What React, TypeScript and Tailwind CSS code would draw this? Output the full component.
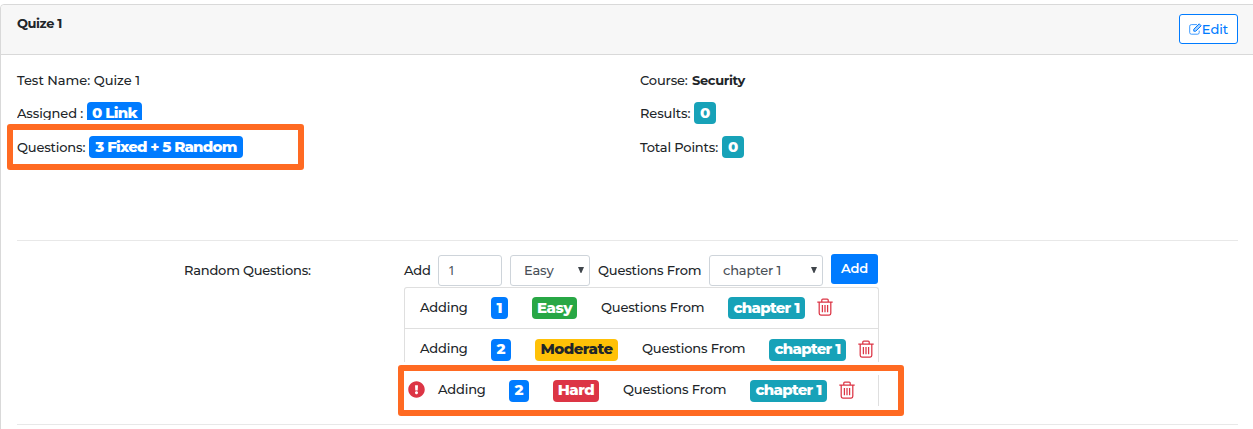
import React from "react";
import { FaExclamationCircle } from "react-icons/fa";

function Label({ children, className = "" }: { children: React.ReactNode; className?: string }) {
  return <span className={"block shrink-0 whitespace-nowrap " + className}>{children}</span>;
}

function Badge({ children, className = "" }: { children: React.ReactNode; className?: string }) {
  return (
    <span
      className={
        "flex h-[22px] shrink-0 items-center justify-center rounded pb-[2px] whitespace-nowrap text-[15px] leading-none font-extrabold " +
        className
      }
    >
      {children}
    </span>
  );
}

function Trash({ className = "" }: { className?: string }) {
  return (
    <svg className={"h-[18px] w-4 shrink-0 " + className} viewBox="0 0 16 18" fill="none" stroke="#dc3545" strokeWidth="1.25">
      <path d="M.3 4.2H15.7M4.8 4V2Q4.8 1 5.8 1H10.2Q11.2 1 11.2 2V4M2.2 4.4V15.3Q2.2 17 3.8 17H12.2Q13.8 17 13.8 15.3V4.4M5.4 7V14.2M8 7V14.2M10.6 7V14.2" />
    </svg>
  );
}

function Select({ value, className = "" }: { value: string; className?: string }) {
  return (
    <div className={"flex h-[31px] shrink-0 items-center justify-between rounded-[3px] border border-[#ced4da] bg-white pr-[5px] pl-[13px] text-[#495057] " + className}>
      <Label className="pb-[2px]">{value}</Label>
      <svg className="mb-[2px] h-[6px] w-[6px]" viewBox="0 0 6 6">
        <path d="M0 0H6L3.4 6H2.6Z" fill="#3f454b" />
      </svg>
    </div>
  );
}

type RowProps = {
  count: string;
  countWidth: string;
  level: string;
  levelClass: string;
};

function RuleRow({ count, countWidth, level, levelClass }: RowProps) {
  return (
    <>
      <Label className="w-[71px] pb-[3px]">Adding</Label>
      <Badge className={"bg-[#007bff] text-white " + countWidth}>{count}</Badge>
      <Badge className={"ml-6 tracking-[-0.5px] " + levelClass}>{level}</Badge>
      <Label className="ml-6 w-[127px] pb-[3px]">Questions From</Label>
      <Badge className="w-[77px] bg-[#17a2b8] text-white tracking-[-0.7px]">chapter 1</Badge>
      <Trash className="mb-[2px] ml-3" />
    </>
  );
}

export default function App() {
  return (
    <div className="h-[429px] w-[1253px] overflow-hidden bg-white pt-1 font-['Montserrat','Inter',sans-serif] text-[13px] leading-5 font-medium tracking-[-0.16px] text-[#212529]">
      <div className="h-[440px] w-[1255px] rounded-tl border border-[#d9d9d9]">
        <header className="flex h-[50px] items-start justify-between rounded-tl border-b border-[#d9d9d9] bg-[#f7f7f7] pr-[16px] pl-4">
          <h1 className="mt-[8px] font-bold tracking-[-0.4px]">Quize 1</h1>
          <button className="mt-[9px] flex h-[30px] w-[59px] items-center justify-center rounded-[3px] border border-[#007bff] bg-white text-[#007bff]">
            <svg className="h-[12px] w-[13px]" viewBox="0 0 13 12" fill="none" stroke="#007bff">
              <path d="M8 1.6H2.4Q.7 1.6.7 3.2V9.6Q.7 11.2 2.4 11.2H8.6Q10.2 11.2 10.2 9.6V7.6" strokeOpacity=".75" />
              <path d="M4.8 8.2V6.2L10.2.8 12.2 2.8 6.8 8.2Z" fill="#007bff" fillOpacity=".35" />
            </svg>
            <span className="tracking-[0px]">Edit</span>
          </button>
        </header>

        <section className="flex h-[185px] pl-4">
          <div className="w-[623px]">
            <div className="flex h-[47px] items-center pt-[3px]">
              <Label className="tracking-[0px]">Test Name: Quize 1</Label>
            </div>
            <div className="flex h-[18px] overflow-hidden">
              <Label className="w-[70px] pt-[1px] tracking-[-0.1px]">Assigned :</Label>
              <Badge className="w-[55px] bg-[#007bff] text-white tracking-[-0.7px]">0 Link</Badge>
            </div>
            <div className="mt-1 -ml-[10px] flex h-[46px] w-[297px] items-center rounded-[3px] border-[6px] border-[#ff6a22] pl-1">
              <Label className="w-[72px]">Questions:</Label>
              <Badge className="w-[154px] bg-[#007bff] text-white tracking-[-0.78px]">3 Fixed + 5 Random</Badge>
            </div>
          </div>
          <div>
            <div className="flex h-[47px] items-center pt-[3px]">
              <Label className="w-[52px]">Course:</Label>
              <Label className="font-bold tracking-[-0.35px]">Security</Label>
            </div>
            <div className="flex h-[22px] items-center">
              <Label className="w-[54px] tracking-[-0.1px]">Results:</Label>
              <Badge className="w-[22px] bg-[#17a2b8] text-white">0</Badge>
            </div>
            <div className="mt-3 flex h-[22px] items-center">
              <Label className="w-[82px]">Total Points:</Label>
              <Badge className="w-[22px] bg-[#17a2b8] text-white">0</Badge>
            </div>
          </div>
        </section>

        <section className="mx-4 flex h-[185px] w-[1221px] border-y border-[#e8e8e8]">
          <Label className="w-[220px] pt-[19px] pl-[167px] tracking-[-0.2px]">Random Questions:</Label>
          <div className="ml-[167px] w-[500px] pt-[13px]">
            <div className="flex h-[33px] items-start">
              <Label className="w-[34px] pt-[6px]">Add</Label>
              <div className="mt-[1px] flex h-[31px] w-16 items-center rounded-[3px] border border-[#ced4da] pb-[1px] pl-[9px] text-[#495057]">
                <span className="font-['Noto_Sans',sans-serif] text-[13px] font-normal">1</span>
              </div>
              <Select value="Easy" className="mt-[1px] ml-2 w-20" />
              <Label className="ml-2 w-[111px] pt-[6px]">Questions From</Label>
              <Select value="chapter 1" className="mt-[1px] w-[114px]" />
              <button className="ml-2 flex h-[30px] w-[47px] items-center justify-center rounded-[3px] bg-[#007bff] pb-[2px] font-semibold text-white">
                Add
              </button>
            </div>
            <div className="h-[75px] w-[475px] rounded-t-[3px] border border-b-0 border-[#dfdfdf]">
              <div className="flex h-[41px] items-center border-b border-[#dfdfdf] pl-[15px]">
                <RuleRow count="1" countWidth="w-[17px]" level="Easy" levelClass="w-[45px] bg-[#28a745] text-white" />
              </div>
              <div className="flex h-[41px] items-center pl-[15px]">
                <RuleRow count="2" countWidth="w-5" level="Moderate" levelClass="w-[83px] bg-[#ffc107] text-[#212529]" />
              </div>
            </div>
            <div className="mt-[3px] -ml-[6px] flex h-[51px] w-[506px] items-center rounded-[3px] border-[6px] border-[#ff6a22] pl-1">
              <FaExclamationCircle className="mr-[13px] mb-[2px] h-[17px] w-[17px] shrink-0 text-[#dc3545]" />
              <RuleRow count="2" countWidth="w-5" level="Hard" levelClass="w-[46px] bg-[#dc3545] text-white" />
              <div className="ml-[23px] h-[31px] w-px shrink-0 bg-[#dfdfdf]" />
            </div>
          </div>
        </section>
      </div>
    </div>
  );
}
